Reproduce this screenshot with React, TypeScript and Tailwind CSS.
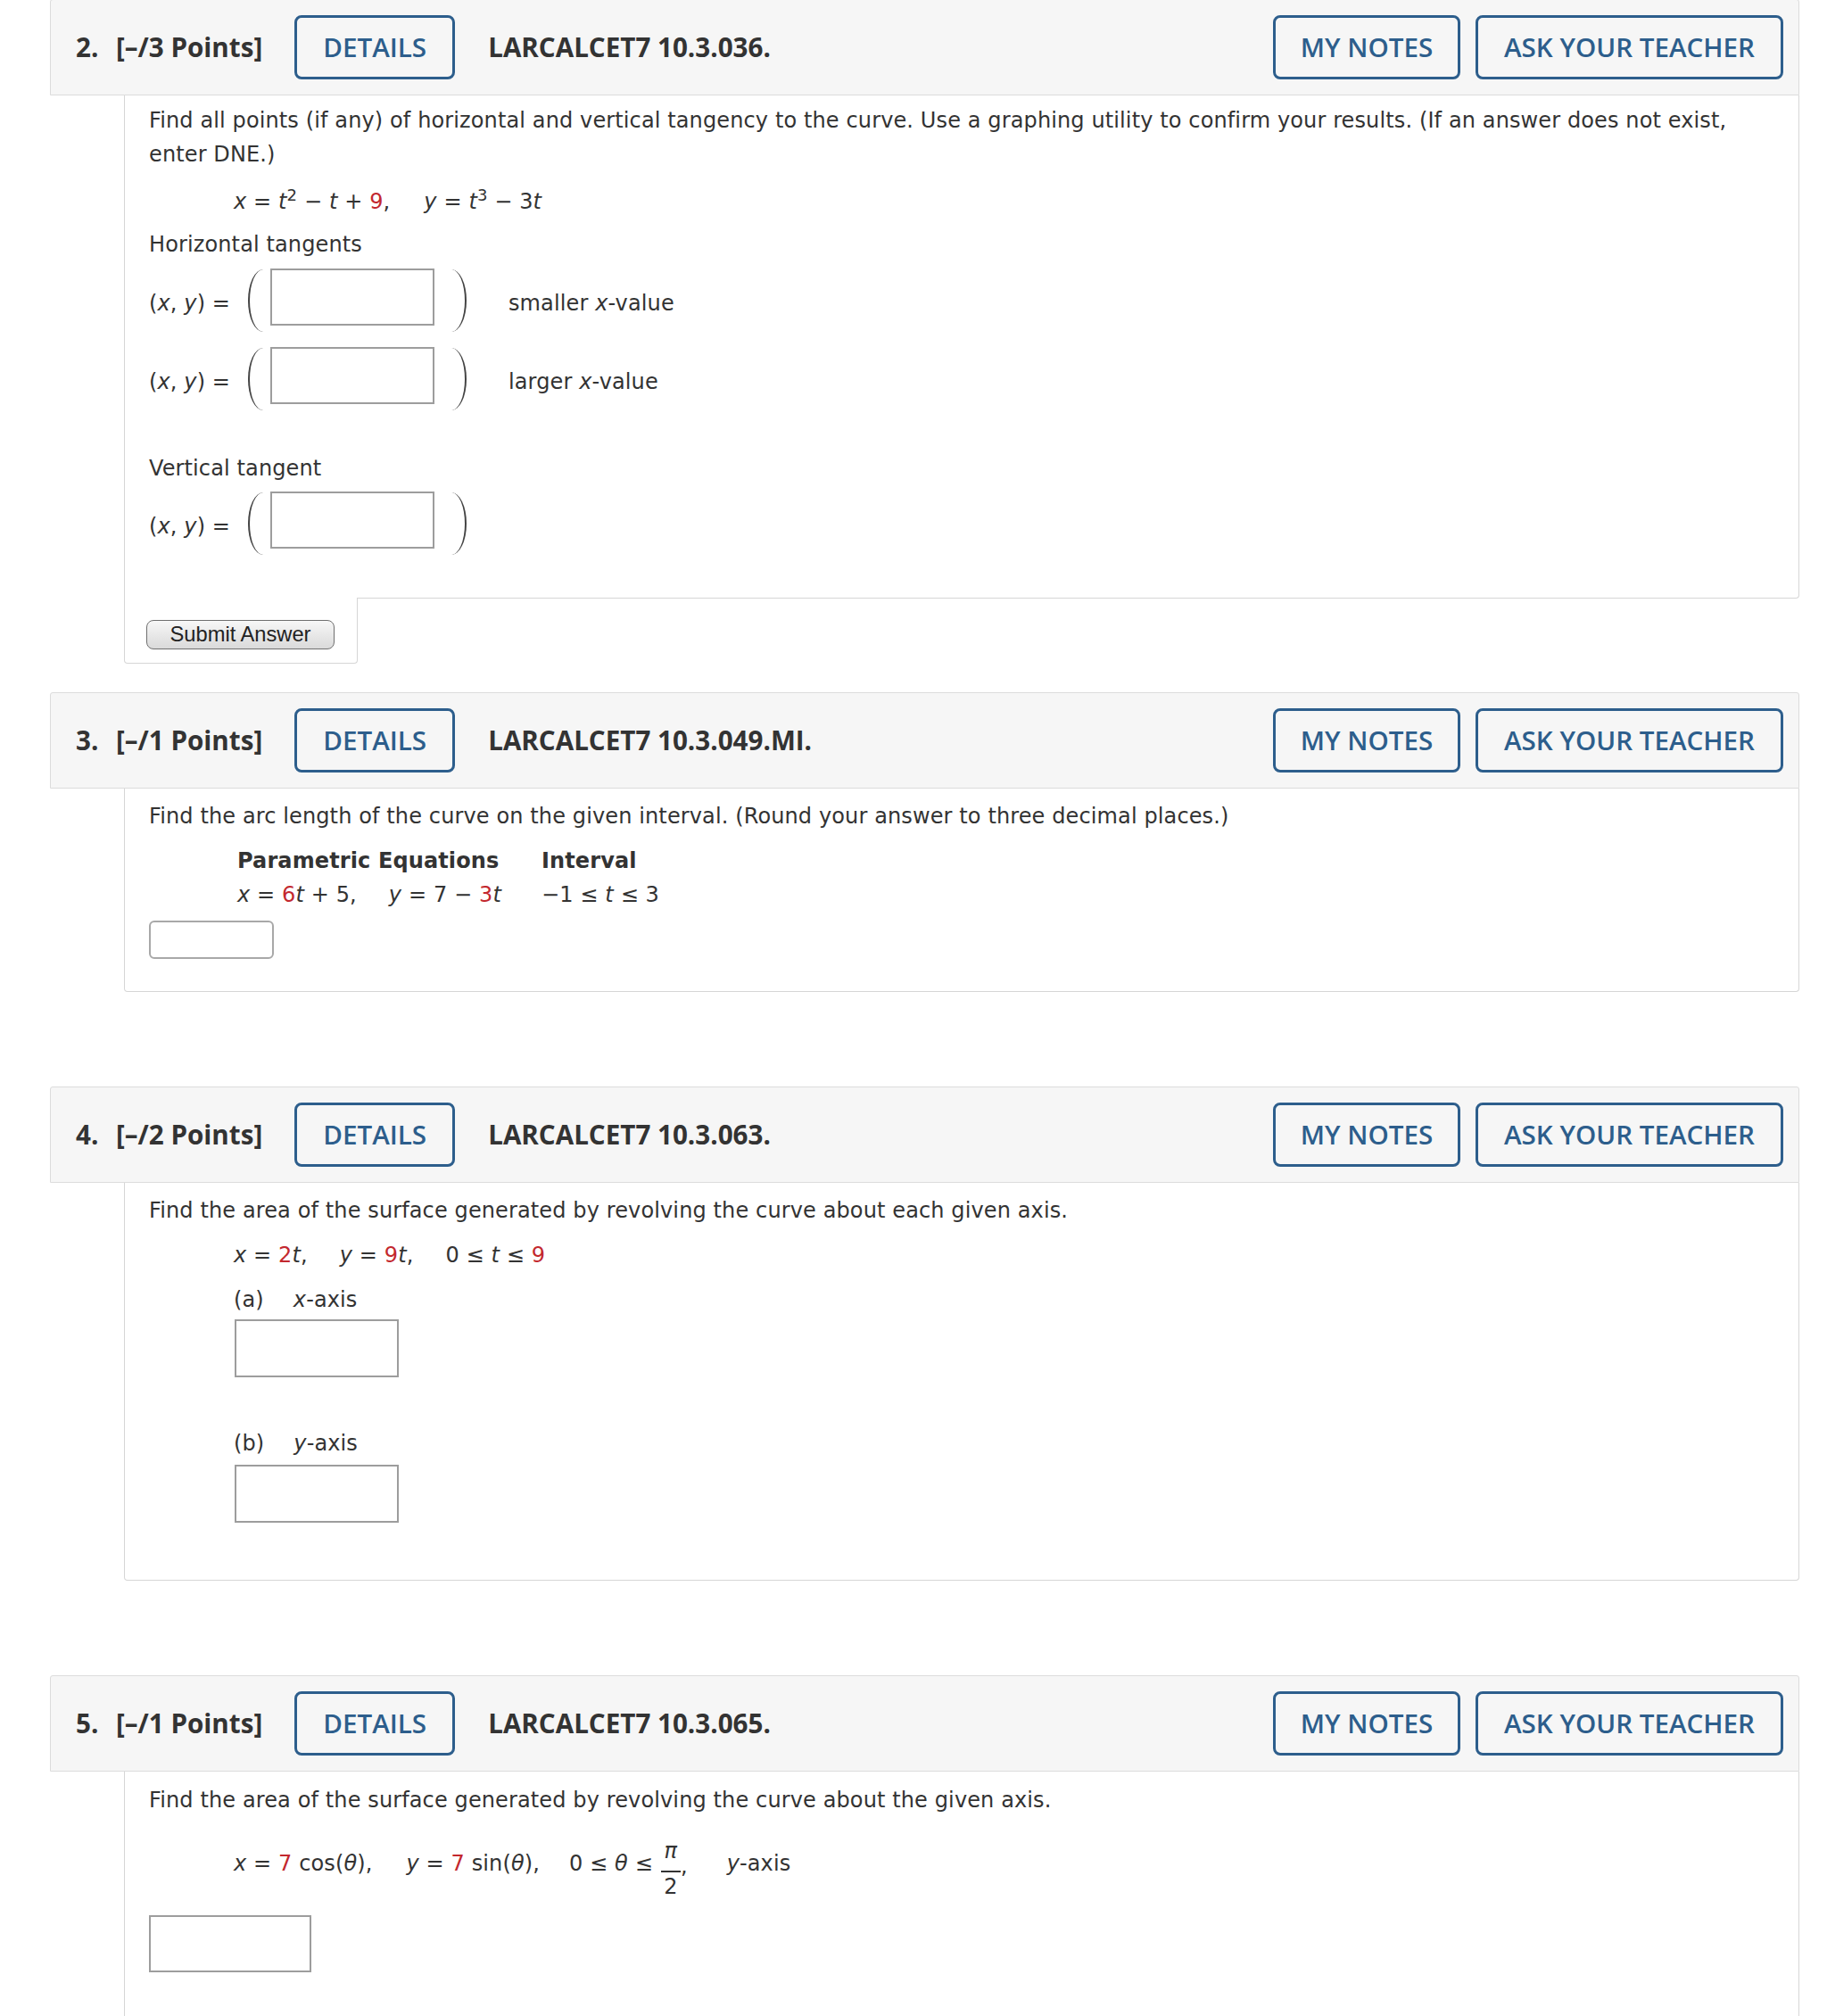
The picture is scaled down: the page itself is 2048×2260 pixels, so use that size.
import type { ReactNode } from 'react'

function V({ children }: { children: ReactNode }) {
  return <i className="italic">{children}</i>
}

function R({ children }: { children: ReactNode }) {
  return <span className="text-[#c3282e]">{children}</span>
}

function Header({ n, pts, code }: { n: number; pts: number; code: string }) {
  return (
    <div className="flex h-[108px] items-center rounded-t-[3px] border border-[#dcdcdc] bg-[#f6f6f6] pl-[28px] pr-[17px] font-['Open_Sans',sans-serif] text-[29.6px] tracking-normal text-[#333]">
      <span className="w-[45px] font-bold">{n}.</span>
      <span className="font-bold">[–/{pts} Points]</span>
      <button className="ml-[36px] h-[72px] w-[180px] rounded-[8px] border-[3px] border-[#2d5e8c] font-semibold text-[#2d5e8c]">
        DETAILS
      </button>
      <span className="ml-[37px] font-bold">{code}</span>
      <button className="ml-auto h-[72px] w-[210px] rounded-[8px] border-[3px] border-[#2d5e8c] font-semibold text-[#2d5e8c]">
        MY NOTES
      </button>
      <button className="ml-[17px] h-[72px] w-[345px] rounded-[8px] border-[3px] border-[#2d5e8c] font-semibold text-[#2d5e8c]">
        ASK YOUR TEACHER
      </button>
    </div>
  )
}

// (x, y) = ( [box] )  label
function PointRow({ label }: { label?: ReactNode }) {
  return (
    <div className="flex h-[72px] items-center">
      <span className="mt-[14px] w-[111px]">
        (<V>x</V>, <V>y</V>) =
      </span>
      <span className="mt-[8px] block h-[70px] w-[17px] rounded-l-[100%_50%] border-l-2 border-[#444]" />
      <input type="text" className="ml-[8px] h-[64px] w-[184px] border-2 border-[#9d9d9d] bg-white outline-none" />
      <span className="ml-[19px] mt-[8px] block h-[70px] w-[17px] rounded-r-[100%_50%] border-r-2 border-[#444]" />
      {label && <span className="ml-[47px] mt-[14px]">{label}</span>}
    </div>
  )
}

export default function App() {
  return (
    <div className="min-h-[2260px] w-[2048px] bg-white pl-[56px] pr-[31px] font-['DejaVu_Sans',Verdana,sans-serif] text-[24px] tracking-[0.12px] text-[#333]">
      {/* question 2 */}
      <div className="-mt-px">
        <Header n={2} pts={3} code="LARCALCET7 10.3.036." />
        <div className="ml-[83px] rounded-br-[4px] border-x border-b border-[#d6d6d6] pb-[51px] pl-[27px] pr-[10px] pt-[9px]">
          <p className="leading-[38px]">
            Find all points (if any) of horizontal and vertical tangency to the curve. Use a graphing utility to confirm your results. (If an answer does not exist,
            <br />
            enter DNE.)
          </p>
          <div className="mt-[15px] pl-[95px] leading-[38px]">
            <V>x</V> = <V>t</V>
            <sup>2</sup> − <V>t</V> + <R>9</R>,<span className="ml-[38px]"><V>y</V> = <V>t</V><sup>3</sup> − 3<V>t</V></span>
          </div>
          <div className="mt-[10px] leading-[38px]">Horizontal tangents</div>
          <div className="mt-[4px]">
            <PointRow label={<>smaller <V>x</V>-value</>} />
          </div>
          <div className="mt-[16px]">
            <PointRow label={<>larger <V>x</V>-value</>} />
          </div>
          <div className="mt-[49px] leading-[38px]">Vertical tangent</div>
          <div className="mt-[3px]">
            <PointRow />
          </div>
        </div>
        <div className="relative -mt-px ml-[83px] h-[74px] w-[262px] rounded-b-[4px] border-x border-b border-[#d6d6d6] bg-white pl-[24px] pt-[23px]">
          <button className="h-[33px] w-[211px] rounded-[8px] border border-[#6f6f6f] bg-gradient-to-b from-[#f7f7f7] to-[#dadada] font-['Liberation_Sans',Arial,sans-serif] text-[23.7px] leading-[31px] tracking-normal text-[#222]">
            Submit Answer
          </button>
        </div>
      </div>

      {/* question 3 */}
      <div className="mt-[32px]">
        <Header n={3} pts={1} code="LARCALCET7 10.3.049.MI." />
        <div className="ml-[83px] rounded-b-[4px] border-x border-b border-[#d6d6d6] pb-[36px] pl-[27px] pt-[12px]">
          <p className="leading-[38px]">Find the arc length of the curve on the given interval. (Round your answer to three decimal places.)</p>
          <div className="ml-[99px] mt-[12px] grid grid-cols-[341px_auto] leading-[38px]">
            <span className="font-bold">Parametric Equations</span>
            <span className="font-bold">Interval</span>
            <span>
              <V>x</V> = <R>6</R>
              <V>t</V> + 5,<span className="ml-[36px]"><V>y</V> = 7 − <R>3</R><V>t</V></span>
            </span>
            <span>
              −1 ≤ <V>t</V> ≤ 3
            </span>
          </div>
          <input type="text" className="mt-[10px] block h-[43px] w-[140px] rounded-[6px] border-2 border-[#a8a8a8] bg-white outline-none" />
        </div>
      </div>

      {/* question 4 */}
      <div className="mt-[106px]">
        <Header n={4} pts={2} code="LARCALCET7 10.3.063." />
        <div className="ml-[83px] rounded-b-[4px] border-x border-b border-[#d6d6d6] pb-[64px] pl-[27px] pt-[12px]">
          <p className="leading-[38px]">Find the area of the surface generated by revolving the curve about each given axis.</p>
          <div className="mt-[12px] pl-[95px] leading-[38px]">
            <V>x</V> = <R>2</R>
            <V>t</V>,<span className="ml-[36px]"><V>y</V> = <R>9</R><V>t</V>,</span>
            <span className="ml-[36px]">
              0 ≤ <V>t</V> ≤ <R>9</R>
            </span>
          </div>
          <div className="mt-[12px] pl-[95px] leading-[38px]">
            (a)<span className="ml-[33px]"><V>x</V>-axis</span>
          </div>
          <input type="text" className="ml-[96px] mt-[3px] block h-[65px] w-[184px] border-2 border-[#9d9d9d] bg-white outline-none" />
          <div className="mt-[55px] pl-[95px] leading-[38px]">
            (b)<span className="ml-[33px]"><V>y</V>-axis</span>
          </div>
          <input type="text" className="ml-[96px] mt-[5px] block h-[65px] w-[184px] border-2 border-[#9d9d9d] bg-white outline-none" />
        </div>
      </div>

      {/* question 5 */}
      <div className="mt-[106px]">
        <Header n={5} pts={1} code="LARCALCET7 10.3.065." />
        <div className="ml-[83px] border-x border-[#d6d6d6] pb-[80px] pl-[27px] pt-[13px]">
          <p className="leading-[38px]">Find the area of the surface generated by revolving the curve about the given axis.</p>
          <div className="mt-[12px] flex h-[80px] items-center pl-[95px]">
            <span>
              <V>x</V> = <R>7</R> cos(<V>θ</V>),
            </span>
            <span className="ml-[38px]">
              <V>y</V> = <R>7</R> sin(<V>θ</V>),
            </span>
            <span className="ml-[33px]">
              0 ≤ <V>θ</V> ≤
            </span>
            <span className="ml-[9px] mt-[12px] flex flex-col items-center leading-none">
              <span className="pb-[10px] text-[24px] italic">π</span>
              <span className="h-[2px] w-[22px] bg-[#333]" />
              <span className="pt-[4px] text-[24px]">2</span>
            </span>
            <span className="mt-[6px]">,</span>
            <span className="ml-[44px]">
              <V>y</V>-axis
            </span>
          </div>
          <input type="text" className="mt-[18px] block h-[64px] w-[182px] border-2 border-[#9d9d9d] bg-white outline-none" />
        </div>
      </div>
    </div>
  )
}
